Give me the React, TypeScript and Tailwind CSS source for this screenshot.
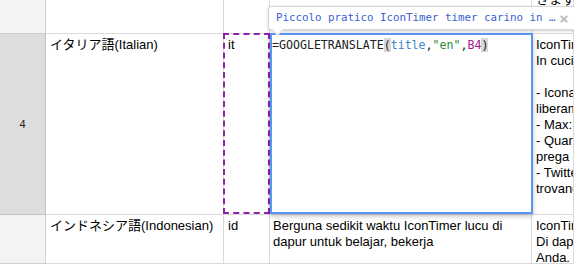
const cellFont = {
  fontFamily: '"Liberation Sans", Arial, "Noto Sans CJK JP", sans-serif',
};

const monoFont = {
  fontFamily: '"DejaVu Sans Mono", "Liberation Mono", monospace',
};

function Lines({ lines }: { lines: string[] }) {
  return (
    <>
      {lines.map((line, i) => (
        <div key={i} className="whitespace-nowrap h-4">
          {line}
        </div>
      ))}
    </>
  );
}

function FormulaEditor() {
  return (
    <div className="absolute left-0 -top-px w-[263px] h-[181px] border-2 border-[#5a95f5] bg-white shadow-[0_2px_5px_rgba(0,0,0,0.25)] z-10">
      <div className="pt-[2px] text-[11.6px] leading-4 whitespace-nowrap text-[#222]" style={monoFont}>
        =GOOGLETRANSLATE
        <span className="bg-[#d8d8d8]">(</span>
        <span className="text-[#3d85c6]">title</span>,
        <span className="text-[#2a8a3a]">"en"</span>,
        <span className="text-[#a1238f]">B4</span>
        <span className="bg-[#d8d8d8]">)</span>
      </div>
    </div>
  );
}

function HintTooltip() {
  return (
    <div className="absolute left-[268px] top-[6px] -right-3 h-[24px] z-20">
      <div className="relative h-full bg-white border border-[#d6d6d6] rounded-[3px] shadow-[0_1px_3px_rgba(0,0,0,0.2)] flex items-center pl-[7px]">
        <span className="text-[10.8px] text-[#3b5fd4] whitespace-nowrap" style={monoFont}>
          Piccolo pratico IconTimer timer carino in …
        </span>
        <span className="ml-[4px] text-[15px] leading-none text-[#b5b5b5] font-bold" style={cellFont}>
          ×
        </span>
        <div className="absolute left-[4px] -bottom-[5px] w-[9px] h-[9px] bg-white rotate-45 border-r border-b border-[#d6d6d6]" />
      </div>
    </div>
  );
}

export default function App() {
  const line = "border-r border-b border-[#dadada]";
  return (
    <div className="relative w-[574px] h-[264px] overflow-hidden bg-white text-black text-[13px] leading-4" style={cellFont}>
      <div className="grid grid-cols-[46px_178px_46px_262px_1fr] grid-rows-[34px_181px_1fr] h-full">
        {/* row 3 (bottom part) */}
        <div className="bg-[#f3f3f3] border-r border-b border-[#cfcfcf]" />
        <div className={line} />
        <div className={line} />
        <div className={line} />
        <div className={`${line} overflow-hidden px-1`}>
          <div className="-mt-[8px] whitespace-nowrap">きますます</div>
        </div>

        {/* row 4 */}
        <div className="bg-[#dddddd] border-r border-b border-[#c4c4c4] flex items-center justify-center text-[11px] text-[#222]">
          4
        </div>
        <div className={`${line} px-1 pt-[3px] whitespace-nowrap`}>イタリア語(Italian)</div>
        <div className={`${line} relative px-1 pt-[3px]`}>
          it
          <div className="absolute -left-px -top-px w-[47px] h-[181px] border-2 border-dashed border-[#8e24aa]" />
        </div>
        <div className={`${line} relative`}>
          <FormulaEditor />
        </div>
        <div className={`${line} overflow-hidden px-1 pt-[3px]`}>
          <Lines
            lines={[
              "IconTimer pratico e carino.",
              "In cucina, per studiare, lavorare",
              "",
              "- Icona del timer",
              "liberamente selezionabile",
              "- Max: 99 minuti",
              "- Quando hai una richiesta,",
              "prega di contattarci",
              "- Twitter:",
              "trovandoci",
            ]}
          />
        </div>

        {/* row 5 */}
        <div className="bg-[#f3f3f3] border-r border-b border-[#cfcfcf]" />
        <div className={`${line} px-1 pt-[3px] whitespace-nowrap`}>インドネシア語(Indonesian)</div>
        <div className={`${line} px-1 pt-[3px]`}>id</div>
        <div className={`${line} px-[3px] pt-[3px]`}>
          <Lines lines={["Berguna sedikit waktu IconTimer lucu di", "dapur untuk belajar, bekerja"]} />
        </div>
        <div className={`${line} overflow-hidden px-1 pt-[3px]`}>
          <Lines lines={["IconTimer lucu", "Di dapur", "Anda."]} />
        </div>
      </div>
      <HintTooltip />
    </div>
  );
}
